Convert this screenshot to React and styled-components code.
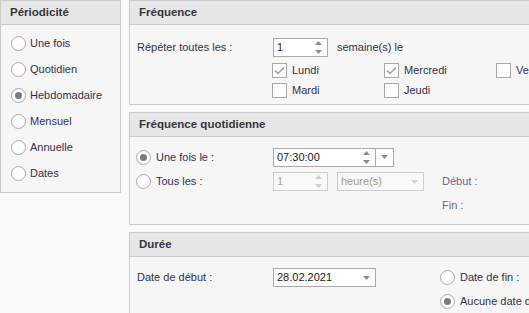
import React from "react";
import styled, { createGlobalStyle } from "styled-components";

const Global = createGlobalStyle`
  html, body { margin: 0; padding: 0; background: #f9f9f9; }
  body { font-family: "Liberation Sans", Arial, sans-serif; font-size: 11px; color: #31314c; }
  * { box-sizing: border-box; }
`;

const Page = styled.div`
  display: flex;
  align-items: flex-start;
  width: 529px;
  height: 313px;
  overflow: hidden;
  background: #f9f9f9;
`;

const Panel = styled.div`
  flex-shrink: 0;
  width: ${(p) => p.$w}px;
  height: ${(p) => p.$h}px;
  border: 1px solid #cbcbcb;
  background: #f7f7f7;
  display: flex;
  flex-direction: column;
`;

const Header = styled.div`
  height: 24px;
  line-height: 23px;
  border-bottom: 1px solid #cbcbcb;
  background: #e6e6e6;
  padding-left: 9px;
  font-weight: bold;
  font-size: 11.5px;
  color: #35353f;
  white-space: nowrap;
`;

const RightColumn = styled.div`
  display: flex;
  flex-direction: column;
  gap: 7px;
  margin-left: 8px;
  flex-shrink: 0;
`;

const RadioList = styled.div`
  display: flex;
  flex-direction: column;
  padding: 5px 0 0 10px;
`;

const RadioRow = styled.label`
  display: flex;
  align-items: center;
  gap: ${(p) => p.$gap ?? 4}px;
  height: ${(p) => p.$h ?? 26}px;
  white-space: nowrap;
`;

const Circle = styled.span`
  position: relative;
  flex-shrink: 0;
  width: 15px;
  height: 15px;
  border-radius: 50%;
  border: 1px solid #a9a9a9;
  background: #ffffff;
  &::after {
    content: "";
    display: ${(p) => (p.$on ? "block" : "none")};
    position: absolute;
    left: 3px;
    top: 3px;
    width: 7px;
    height: 7px;
    border-radius: 50%;
    background: #7c7c7c;
  }
`;

const Radio = ({ on, children, gap, h }) => (
  <RadioRow $gap={gap} $h={h}>
    <Circle $on={on} />
    <span>{children}</span>
  </RadioRow>
);

const Body1 = styled.div`
  padding: 12px 0 0 7px;
  display: flex;
  flex-direction: column;
`;

const Row = styled.div`
  display: flex;
  align-items: center;
  height: ${(p) => p.$h ?? 20}px;
  white-space: nowrap;
`;

const Label = styled.span`
  width: ${(p) => p.$w}px;
  flex-shrink: 0;
  white-space: nowrap;
  margin-left: ${(p) => p.$ml ?? 0}px;
`;

const Box = styled.div`
  position: relative;
  flex-shrink: 0;
  width: ${(p) => p.$w}px;
  height: 19px;
  border: 1px solid ${(p) => (p.$disabled ? "#cfcfcf" : "#ababab")};
  background: ${(p) => (p.$disabled ? "#f9f9f9" : "#ffffff")};
  color: ${(p) => (p.$disabled ? p.$dc || "#a6a6a6" : "#222222")};
  padding-left: 3px;
  display: flex;
  align-items: center;
  margin-left: ${(p) => p.$ml ?? 0}px;
`;

const Arrows = styled.span`
  position: absolute;
  right: 5px;
  top: 0;
  bottom: 0;
  display: flex;
  flex-direction: column;
  justify-content: center;
  gap: 5px;
`;

const Caret = styled.svg`
  display: block;
  width: 7px;
  height: 4px;
`;

const Up = ({ c }) => (
  <Caret viewBox="0 0 7 4">
    <polygon points="3.5,0 7,4 0,4" fill={c} />
  </Caret>
);
const Down = ({ c }) => (
  <Caret viewBox="0 0 7 4">
    <polygon points="0,0 7,0 3.5,4" fill={c} />
  </Caret>
);

const Drop = styled.span`
  position: absolute;
  right: 5px;
  top: 7px;
`;

const SideButton = styled.div`
  width: 18px;
  height: 19px;
  border: 1px solid #ababab;
  border-left: none;
  background: #ffffff;
  display: flex;
  align-items: center;
  justify-content: center;
`;

const Spin = ({ value, w, disabled }) => {
  const c = disabled ? "#cdcdcd" : "#8c8c8c";
  return (
    <Box $w={w} $disabled={disabled}>
      {value}
      <Arrows>
        <Up c={c} />
        <Down c={c} />
      </Arrows>
    </Box>
  );
};

const CheckGrid = styled.div`
  display: grid;
  grid-template-columns: repeat(3, 112px);
  grid-auto-rows: 20px;
  margin: 3px 0 0 135px;
`;

const CheckItem = styled.label`
  display: flex;
  align-items: center;
  gap: 5px;
  white-space: nowrap;
`;

const CheckBox = styled.span`
  flex-shrink: 0;
  width: 15px;
  height: 15px;
  border: 1px solid #a9a9a9;
  background: #ffffff;
  display: flex;
  align-items: center;
  justify-content: center;
`;

const Check = ({ on, children }) => (
  <CheckItem>
    <CheckBox>
      {on && (
        <svg width="11" height="9" viewBox="0 0 11 9">
          <polyline points="1,4.5 4,7.5 10,1.5" fill="none" stroke="#8d8d8d" strokeWidth="1.1" />
        </svg>
      )}
    </CheckBox>
    <span>{children}</span>
  </CheckItem>
);

const Grid = styled.div`
  display: grid;
  grid-template-columns: ${(p) => p.$cols};
  grid-auto-rows: 24px;
  align-items: center;
  padding: 8px 0 0 ${(p) => p.$pl}px;
  white-space: nowrap;
`;

const Cell = styled.div`
  grid-column: ${(p) => p.$col || "auto"};
  display: flex;
  align-items: center;
  color: ${(p) => (p.$muted ? "#5f6a8c" : "inherit")};
`;

export default function App() {
  return (
    <>
      <Global />
      <Page>
        <Panel $w={121} $h={193}>
          <Header>Périodicité</Header>
          <RadioList>
            <Radio>Une fois</Radio>
            <Radio>Quotidien</Radio>
            <Radio on>Hebdomadaire</Radio>
            <Radio>Mensuel</Radio>
            <Radio>Annuelle</Radio>
            <Radio>Dates</Radio>
          </RadioList>
        </Panel>

        <RightColumn>
          <Panel $w={420} $h={105}>
            <Header>Fréquence</Header>
            <Body1>
              <Row>
                <Label $w={136}>Répéter toutes les :</Label>
                <Spin value="1" w={55} />
                <Label $ml={9}>semaine(s) le</Label>
              </Row>
              <CheckGrid>
                <Check on>Lundi</Check>
                <Check on>Mercredi</Check>
                <Check>Vendredi</Check>
                <Check>Mardi</Check>
                <Check>Jeudi</Check>
              </CheckGrid>
            </Body1>
          </Panel>

          <Panel $w={420} $h={113}>
            <Header>Fréquence quotidienne</Header>
            <Grid $cols="137px 64px 105px 1fr" $pl={6}>
              <Cell>
                <Radio on gap={5} h={24}>Une fois le :</Radio>
              </Cell>
              <Cell $col="2 / span 3">
                <Box $w={103}>
                  07:30:00
                  <Arrows>
                    <Up c="#8c8c8c" />
                    <Down c="#8c8c8c" />
                  </Arrows>
                </Box>
                <SideButton>
                  <Down c="#8c8c8c" />
                </SideButton>
              </Cell>
              <Cell>
                <Radio gap={5} h={24}>Tous les :</Radio>
              </Cell>
              <Cell>
                <Spin value="1" w={55} disabled />
              </Cell>
              <Cell>
                <Box $w={87} $disabled $dc="#a39d8c">
                  heure(s)
                  <Drop>
                    <Down c="#d2d2d2" />
                  </Drop>
                </Box>
              </Cell>
              <Cell $muted>Début :</Cell>
              <Cell $col="4" $muted>Fin :</Cell>
            </Grid>
          </Panel>

          <Panel $w={420} $h={120}>
            <Header>Durée</Header>
            <Grid $cols="136px 167px 1fr" $pl={7}>
              <Cell>Date de début :</Cell>
              <Cell>
                <Box $w={103}>
                  28.02.2021
                  <Drop>
                    <Down c="#8c8c8c" />
                  </Drop>
                </Box>
              </Cell>
              <Cell>
                <Radio gap={5} h={24}>Date de fin :</Radio>
              </Cell>
              <Cell $col="3">
                <Radio on gap={5} h={24}>Aucune date de fin</Radio>
              </Cell>
            </Grid>
          </Panel>
        </RightColumn>
      </Page>
    </>
  );
}
